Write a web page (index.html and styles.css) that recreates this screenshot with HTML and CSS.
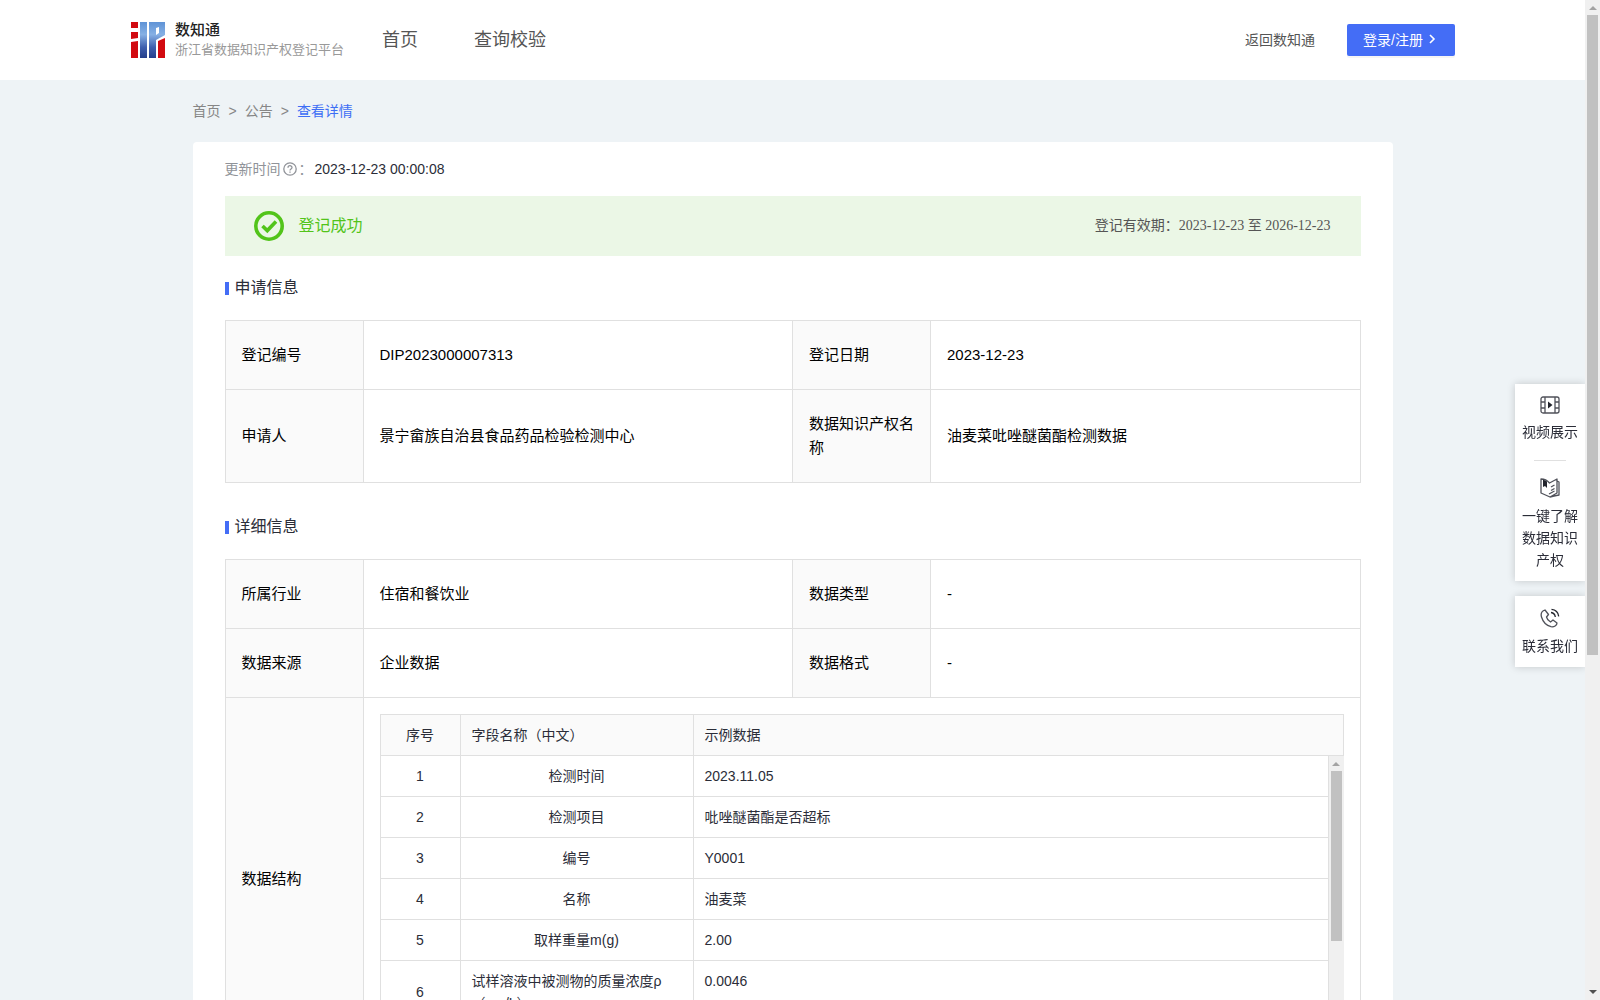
FILE: index.html
```html
<!DOCTYPE html>
<html lang="zh-CN">
<head>
  <meta charset="UTF-8">
  <title>浙江省数据知识产权登记平台</title>
  <link rel="stylesheet" href="styles.css">
</head>
<body>

  <div class="page">
    <header class="header">
      <a class="logo" href="#">
        <svg width="34" height="36" viewBox="0 0 34 36">
          <defs>
            <linearGradient id="blue" x1="0" y1="0" x2="0" y2="1">
              <stop offset="0" stop-color="#5f93d6"/>
              <stop offset="0.35" stop-color="#86b0e4"/>
              <stop offset="0.7" stop-color="#3f5fae"/>
              <stop offset="1" stop-color="#253f8c"/>
            </linearGradient>
          </defs>
          <path fill="#d20a10" d="M0 0h7v6H0zM0 10h7v6l-7 1zM0 20l7-1v17H0zM27 19l7-3v20h-7z"/>
          <path fill="url(#blue)" fill-rule="evenodd" d="M9 0h7v36H9zM18 0h16v13l-9 5v18h-7zM25 6v7l3-2V5z"/>
        </svg>
        <span class="logo-text">
          <strong>数知通</strong>
          <small>浙江省数据知识产权登记平台</small>
        </span>
      </a>
      <nav class="nav">
        <a href="#">首页</a>
        <a href="#">查询校验</a>
      </nav>
      <div class="header-right">
        <a class="back" href="#">返回数知通</a>
        <button type="button" class="login-btn">登录/注册
          <svg width="14" height="14" viewBox="0 0 14 14"><path d="M5 3l4 4-4 4" fill="none" stroke="#fff" stroke-width="1.6"/></svg>
        </button>
      </div>
    </header>

    <main class="container">
      <div class="breadcrumb">
        <a href="#">首页</a><span>&gt;</span><a href="#">公告</a><span>&gt;</span><a class="active" href="#">查看详情</a>
      </div>

      <div class="card">
        <div class="update-time">
          更新时间<svg width="14" height="14" viewBox="0 0 14 14" fill="none" stroke="#909399"><circle cx="7" cy="7" r="6.2" stroke-width="1.3"/><path d="M5 5.7c0-2.7 4-2.6 4-.2 0 1.4-2 1.5-2 3M7 9.4v1.3" stroke-width="1.3"/></svg>：<span>2023-12-23 00:00:08</span>
        </div>

        <div class="status">
          <svg width="30" height="30" viewBox="0 0 30 30" fill="none" stroke="#52c41a"><circle cx="15" cy="15" r="13.2" stroke-width="3.6"/><path d="M8.5 15l4.8 4.6 8.7-9" stroke-width="3.6"/></svg>
          <span class="status-text">登记成功</span>
          <span class="validity">登记有效期：2023-12-23 至 2026-12-23</span>
        </div>

        <h2>申请信息</h2>
        <table class="info">
          <colgroup><col class="label"><col><col class="label"><col></colgroup>
          <tr><th>登记编号</th><td>DIP2023000007313</td><th>登记日期</th><td>2023-12-23</td></tr>
          <tr><th>申请人</th><td>景宁畲族自治县食品药品检验检测中心</td><th>数据知识产权名称</th><td>油麦菜吡唑醚菌酯检测数据</td></tr>
        </table>

        <h2>详细信息</h2>
        <table class="info">
          <colgroup><col class="label"><col><col class="label"><col></colgroup>
          <tr><th>所属行业</th><td>住宿和餐饮业</td><th>数据类型</th><td>-</td></tr>
          <tr><th>数据来源</th><td>企业数据</td><th>数据格式</th><td>-</td></tr>
          <tr>
            <th>数据结构</th>
            <td colspan="3" class="struct">
              <table class="fields">
                <colgroup><col class="no"><col class="name"><col></colgroup>
                <tr><th>序号</th><th>字段名称（中文）</th><th>示例数据</th></tr>
              </table>
              <div class="fields-body">
                <div class="fields-scroll">
                  <table class="fields">
                    <colgroup><col class="no"><col class="name"><col></colgroup>
                    <tr><td>1</td><td>检测时间</td><td>2023.11.05</td></tr>
                    <tr><td>2</td><td>检测项目</td><td>吡唑醚菌酯是否超标</td></tr>
                    <tr><td>3</td><td>编号</td><td>Y0001</td></tr>
                    <tr><td>4</td><td>名称</td><td>油麦菜</td></tr>
                    <tr><td>5</td><td>取样重量m(g)</td><td>2.00</td></tr>
                    <tr class="top"><td>6</td><td>试样溶液中被测物的质量浓度ρ（mg/L）</td><td>0.0046</td></tr>
                  </table>
                </div>
                <div class="scrollbar" aria-hidden="true">
                  <i class="up"></i><div class="track"><div class="thumb"></div></div><i class="down"></i>
                </div>
              </div>
            </td>
          </tr>
        </table>
      </div>
    </main>
  </div>

  <div class="scrollbar" aria-hidden="true">
    <i class="up"></i><div class="track"><div class="thumb"></div></div><i class="down"></i>
  </div>

  <aside class="float-bar">
    <div class="float-box">
      <a href="#">
        <svg width="20" height="18" viewBox="0 0 20 18" fill="none" stroke="#50525a" stroke-width="1.3"><rect x="1" y="1" width="18" height="16" rx="2"/><path d="M5 1v16M15 1v16M1 6h4M1 12h4M15 6h4M15 12h4"/><path d="M8 5.5v7l4.500-3.500z" fill="#22242c" stroke="none"/></svg>
        <span>视频展示</span>
      </a>
      <hr>
      <a href="#">
        <svg width="20" height="20" viewBox="0 0 20 20" fill="none" stroke="#50525a" stroke-width="1.3" stroke-linejoin="round"><path d="M1 1c3 0 6 1 8.500 4L17 1v14l-7 4-9-4zM17 3l2 1v13l-5 1-4 1"/><path d="M3 1.500l4 2V10L5 8 3 9z" fill="#22242c" stroke="none"/><path d="M11 9l3.500-2M11 12.500l3.500-2M9 16l5.500-3"/></svg>
        <span>一键了解数据知识产权</span>
      </a>
    </div>
    <div class="float-box">
      <a href="#">
        <svg width="20" height="20" viewBox="0 0 20 20" fill="none" stroke="#50525a" stroke-width="1.3" stroke-linejoin="round"><path d="M5 2C2 3 .5 5.500 1.500 9c1.500 5 5 8.500 9.500 9.700 3 .6 6-1.200 6-3.700l-4-3-2.500 2c-2-1-3.500-3-4-5l2-2.500z"/><path d="M11 4.500c2.500.3 4 2 4.300 4.500M11.500 1.300c4 .4 6.700 3 7.200 7" stroke="#22242c"/></svg>
        <span>联系我们</span>
      </a>
    </div>
  </aside>

</body>
</html>
```

FILE: styles.css
```css
* {
  margin: 0;
  padding: 0;
  box-sizing: border-box;
}

body {
  display: flex;
  height: 100vh;
  background: #eef3f6;
  font-family: "Liberation Sans", "Noto Sans CJK SC", sans-serif;
  font-size: 14px;
  line-height: 22px;
  color: #2b2d38;
  overflow: hidden;
}

a {
  color: inherit;
  text-decoration: none;
}

.page {
  flex: 1;
  overflow-y: auto;
  scrollbar-width: none;
}

/* Header */
.header {
  display: flex;
  align-items: center;
  height: 80px;
  padding: 0 130px 0 131px;
  background: #fff;
}

.logo {
  display: flex;
  align-items: center;
  gap: 10px;
}

.logo-text strong,
.logo-text small {
  display: block;
  line-height: 20px;
}

.logo-text strong {
  font-size: 15px;
  font-weight: 500;
  color: #222;
}

.logo-text small {
  font-size: 13px;
  color: #999;
}

.nav {
  display: flex;
  gap: 56px;
  margin-left: 38px;
  font-size: 18px;
  color: #555;
}

.header-right {
  display: flex;
  align-items: center;
  gap: 32px;
  margin-left: auto;
  color: #555;
}

.login-btn {
  display: flex;
  align-items: center;
  gap: 2px;
  width: 108px;
  height: 32px;
  padding: 0 16px 2px;
  border: none;
  border-radius: 2px;
  background: #446df6;
  box-shadow: 0 2px 0 rgba(0, 0, 0, 0.04);
  color: #fff;
  font-family: inherit;
  font-size: 14px;
  white-space: nowrap;
  cursor: pointer;
}

/* Content */
.container {
  max-width: 1200px;
  margin: 0 auto;
}

.breadcrumb {
  padding: 20px 0;
  color: #868686;
}

.breadcrumb span {
  margin: 0 8px;
}

.breadcrumb .active {
  color: #3d6ef5;
}

.card {
  padding: 16px 32px 32px;
  border-radius: 4px;
  background: #fff;
}

.update-time {
  color: #909399;
}

.update-time svg {
  margin: 0 2px;
  vertical-align: -2px;
}

.update-time span {
  margin-left: 2px;
  color: #2b2d38;
}

.status {
  display: flex;
  align-items: center;
  height: 60px;
  margin-top: 16px;
  padding: 0 30px 0 29px;
  background: #ebf7e6;
}

.status-text {
  margin-left: 15px;
  font-size: 16px;
  color: #52c41a;
}

.validity {
  margin-left: auto;
  font-family: "Liberation Serif", "Noto Sans CJK SC", serif;
  color: #555;
}

h2 {
  display: flex;
  align-items: center;
  gap: 6px;
  margin: 20px 0;
  font-size: 16px;
  font-weight: 400;
  line-height: 24px;
}

h2::before {
  content: "";
  width: 4px;
  height: 13px;
  background: #446df6;
}

table {
  width: 100%;
  border-collapse: collapse;
  table-layout: fixed;
}

.info {
  font-size: 15px;
  line-height: 24px;
  color: #000;
}

.info + h2 {
  margin-top: 32px;
}

.info .label {
  width: 138px;
}

.info th,
.info td {
  padding: 22px 16px;
  border: 1px solid #e0e0e0;
  font-weight: 400;
  text-align: left;
}

.info th {
  background: #fafafa;
}

.info .struct {
  padding: 16px;
}

/* Field list */
.fields {
  font-size: 14px;
  line-height: 22px;
  color: #2b2d38;
}

.fields .no {
  width: 80px;
}

.fields .name {
  width: 233px;
}

.info .fields th,
.info .fields td {
  padding: 9px 11px;
}

.info .fields tr > :first-child,
.info .fields td:nth-child(2) {
  text-align: center;
}

.info .fields .top td:nth-child(n + 2) {
  text-align: left;
  vertical-align: top;
}

.fields-body {
  display: flex;
  height: 288px;
}

.fields-scroll {
  flex: 1;
  overflow-y: auto;
  scrollbar-width: none;
}

.info .fields-scroll td {
  border-top: none;
}

/* Scrollbars */
.scrollbar {
  display: flex;
  flex-direction: column;
  align-items: center;
  width: 15px;
  padding: 6px 0;
  background: #f0f0f0;
}

.track {
  flex: 1;
  width: 11px;
  margin: 5px 0;
}

.thumb {
  height: 66%;
  background: #c1c1c1;
}

.up,
.down {
  border: 4px solid transparent;
}

.up {
  border-top: none;
  border-bottom-color: #a3a3a3;
}

.down {
  border-bottom: none;
  border-top-color: #505050;
}

/* Floating links */
.float-bar {
  position: fixed;
  top: 384px;
  right: 15px;
  width: 70px;
}

.float-box {
  margin-bottom: 15px;
  padding: 12px 7px 10px;
  background: #fff;
  box-shadow: 0 0 8px rgba(0, 0, 0, 0.18);
  clip-path: inset(-8px 0 -8px -8px);
  text-align: center;
}

.float-box a,
.float-box svg {
  display: block;
}

.float-box svg {
  margin: 0 auto 7px;
}

.float-box hr {
  width: 32px;
  margin: 17px auto;
  border: none;
  border-top: 1px solid #e0e0e0;
}
```
